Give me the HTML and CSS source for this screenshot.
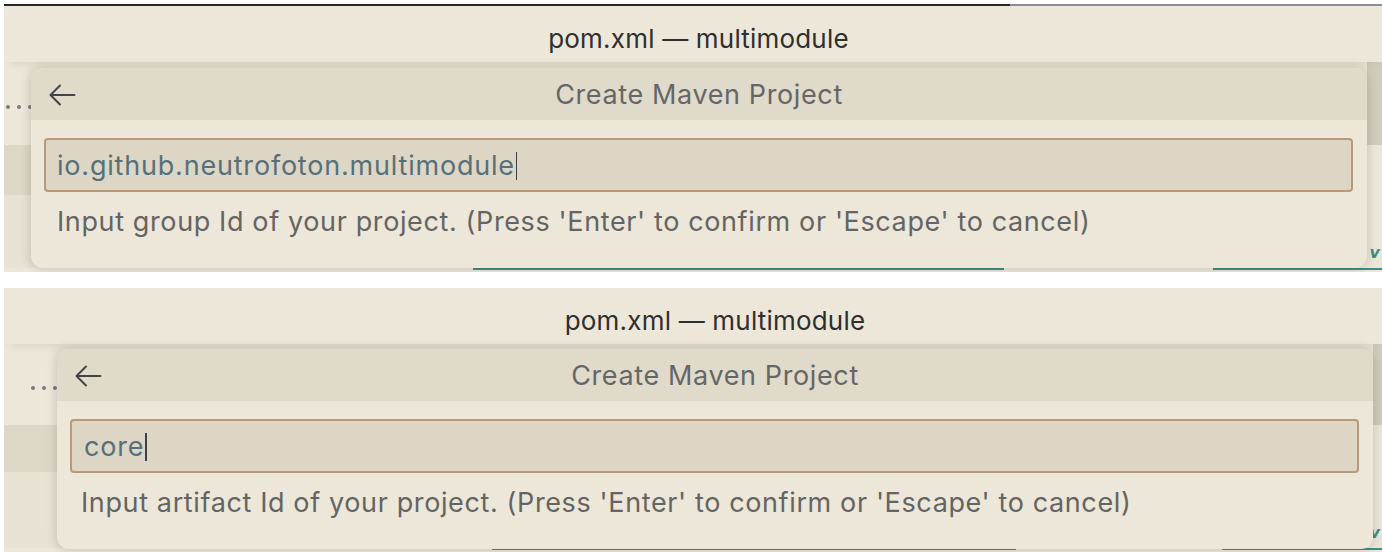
FILE: index.html
```html
<!DOCTYPE html>
<html lang="en">
<head>
<meta charset="utf-8">
<title>Create Maven Project</title>
<link rel="stylesheet" href="styles.css">
</head>
<body>
<div class="shot shot-1">
  <div class="topline"></div>
  <div class="window">
    <div class="titlebar">pom.xml — multimodule</div>
    <div class="workbench">
      <div class="crumbs">
        <div class="dots"><span></span><span></span><span></span></div>
        <div class="slider"></div>
      </div>
      <div class="line current"><div class="gutter"></div></div>
      <div class="fill"><div class="gutter"></div><div class="mark">v</div></div>
      <div class="tabline"><span class="seg seg-a"></span><span class="seg seg-b"></span></div>
    </div>
    <div class="quick-input">
      <div class="qi-header">
        <svg class="back" width="28" height="22" viewBox="0 0 28 22" aria-hidden="true"><path d="M26.5 11H2.5M12 1.5L2.5 11L12 20.5" fill="none" stroke="#444" stroke-width="2" stroke-linecap="round" stroke-linejoin="round"/></svg>
        <div class="qi-title">Create Maven Project</div>
        <div></div>
      </div>
      <div class="qi-body">
        <div class="qi-input">io.github.neutrofoton.multimodule<span class="caret"></span></div>
        <div class="qi-message">Input group Id of your project. (Press 'Enter' to confirm or 'Escape' to cancel)</div>
      </div>
    </div>
  </div>
</div>
<div class="shot shot-2">
  <div class="window">
    <div class="titlebar">pom.xml — multimodule</div>
    <div class="workbench">
      <div class="crumbs">
        <div class="dots"><span></span><span></span><span></span></div>
        <div class="slider"></div>
      </div>
      <div class="line current"><div class="gutter"></div></div>
      <div class="fill"><div class="gutter"></div><div class="mark">v</div></div>
      <div class="tabline"><span class="seg seg-a"></span><span class="seg seg-b"></span></div>
    </div>
    <div class="quick-input">
      <div class="qi-header">
        <svg class="back" width="28" height="22" viewBox="0 0 28 22" aria-hidden="true"><path d="M26.5 11H2.5M12 1.5L2.5 11L12 20.5" fill="none" stroke="#444" stroke-width="2" stroke-linecap="round" stroke-linejoin="round"/></svg>
        <div class="qi-title">Create Maven Project</div>
        <div></div>
      </div>
      <div class="qi-body">
        <div class="qi-input">core<span class="caret"></span></div>
        <div class="qi-message">Input artifact Id of your project. (Press 'Enter' to confirm or 'Escape' to cancel)</div>
      </div>
    </div>
  </div>
</div>
</body>
</html>
```

FILE: styles.css
```css
* { box-sizing: border-box; }

html, body {
  margin: 0;
  background: #ffffff;
}

body {
  padding: 4px 0 0 4px;
  width: 1382px;
  height: 552px;
  overflow: hidden;
  font-family: Inter, "Noto Sans", "Liberation Sans", sans-serif;
  font-size: 26px;
}

.shot-2 { margin-top: 16px; }

.topline {
  height: 2px;
  background: linear-gradient(to right, #25252b 0, #25252b 1006px, #8e8a9b 1006px, #8e8a9b 100%);
}

.window {
  position: relative;
  display: flex;
  flex-direction: column;
  background: #ece7d8;
  overflow: hidden;
}
.shot-1 .window { height: 266px; }
.shot-2 .window { height: 264px; }

.titlebar {
  height: 56px;
  padding-top: 13px;
  text-align: center;
  color: #2f2f2f;
  line-height: 40px;
  letter-spacing: 0.2px;
  box-shadow: 0 6px 10px -6px rgba(0,0,0,0.12);
  position: relative;
  z-index: 1;
}
.shot-1 .titlebar { padding-left: 11px; }
.shot-2 .titlebar { padding-left: 44px; }

.workbench {
  flex: 1;
  display: flex;
  flex-direction: column;
}

.crumbs {
  display: flex;
  justify-content: space-between;
}
.shot-1 .crumbs { height: 83px; }
.shot-2 .crumbs { height: 81px; }

.dots {
  display: flex;
  gap: 7px;
  padding-left: 2px;
}
.shot-1 .dots { padding-top: 43px; }
.shot-2 .dots { padding-top: 42px; padding-left: 27px; }
.dots span {
  width: 4px;
  height: 4px;
  border-radius: 50%;
  background: #7a7a7a;
}

.slider {
  width: 15px;
  background: #d1ccbc;
}
.shot-2 .slider { width: 9px; }

.line.current { display: flex; }
.shot-1 .line.current { height: 50px; }
.shot-2 .line.current { height: 47px; }

.gutter { background: #dcd7c6; }
.shot-1 .gutter { width: 64px; }
.shot-2 .gutter { width: 89px; }

.fill {
  flex: 1;
  display: flex;
  justify-content: space-between;
  align-items: flex-end;
}
.fill .gutter { background: #e7e2d3; align-self: stretch; }

.mark {
  color: #3a8f88;
  font-family: "DejaVu Sans", sans-serif;
  font-weight: bold;
  font-style: italic;
  font-size: 16px;
  line-height: 18px;
  margin-right: 2px;
  padding-bottom: 6px;
}

.tabline {
  height: 4px;
  display: flex;
  padding-bottom: 2px;
}
.seg {
  height: 2px;
  background: #3f8c86;
}
.shot-1 .seg-a { margin-left: 469px; width: 531px; }
.shot-1 .seg-b { margin-left: 209px; flex: 1; }
.shot-2 .seg-a { margin-left: 488px; width: 524px; }
.shot-2 .seg-b { margin-left: 206px; flex: 1; }

/* Quick input overlay */
.quick-input {
  position: absolute;
  z-index: 2;
  background: #ece7d8;
  border-radius: 12px;
  box-shadow: 0 0 10px 2px rgba(0,0,0,0.13);
  overflow: hidden;
  font-size: 27px;
  letter-spacing: 0.62px;
}
.shot-1 .quick-input { top: 62px; left: 27px; width: 1336px; }
.shot-2 .quick-input { top: 61px; left: 53px; width: 1316px; }

.qi-header {
  height: 52px;
  background: #dfdaca;
  display: grid;
  grid-template-columns: 1fr auto 1fr;
  align-items: center;
  padding-left: 17px;
}
.back { display: block; }
.qi-title {
  color: #666666;
  line-height: 52px;
  margin-left: -17px;
  padding-top: 1px;
}

.qi-body {
  padding: 18px 14px 26px 13px;
}

.qi-input {
  height: 54px;
  border: 2px solid #b9997a;
  border-radius: 4px;
  background: #ddd6c4;
  color: #56707b;
  padding-left: 11px;
  padding-top: 1px;
  line-height: 50px;
  letter-spacing: 0.8px;
}
.shot-2 .qi-input { padding-left: 12px; }

.caret {
  display: inline-block;
  width: 1.5px;
  height: 28px;
  background: #3a4248;
  vertical-align: middle;
  margin-left: 1px;
  position: relative;
  top: -2px;
}

.qi-message {
  color: #646464;
  margin-top: 10px;
  line-height: 40px;
  padding-left: 13px;
}
.shot-2 .qi-message { padding-left: 11px; }
```
